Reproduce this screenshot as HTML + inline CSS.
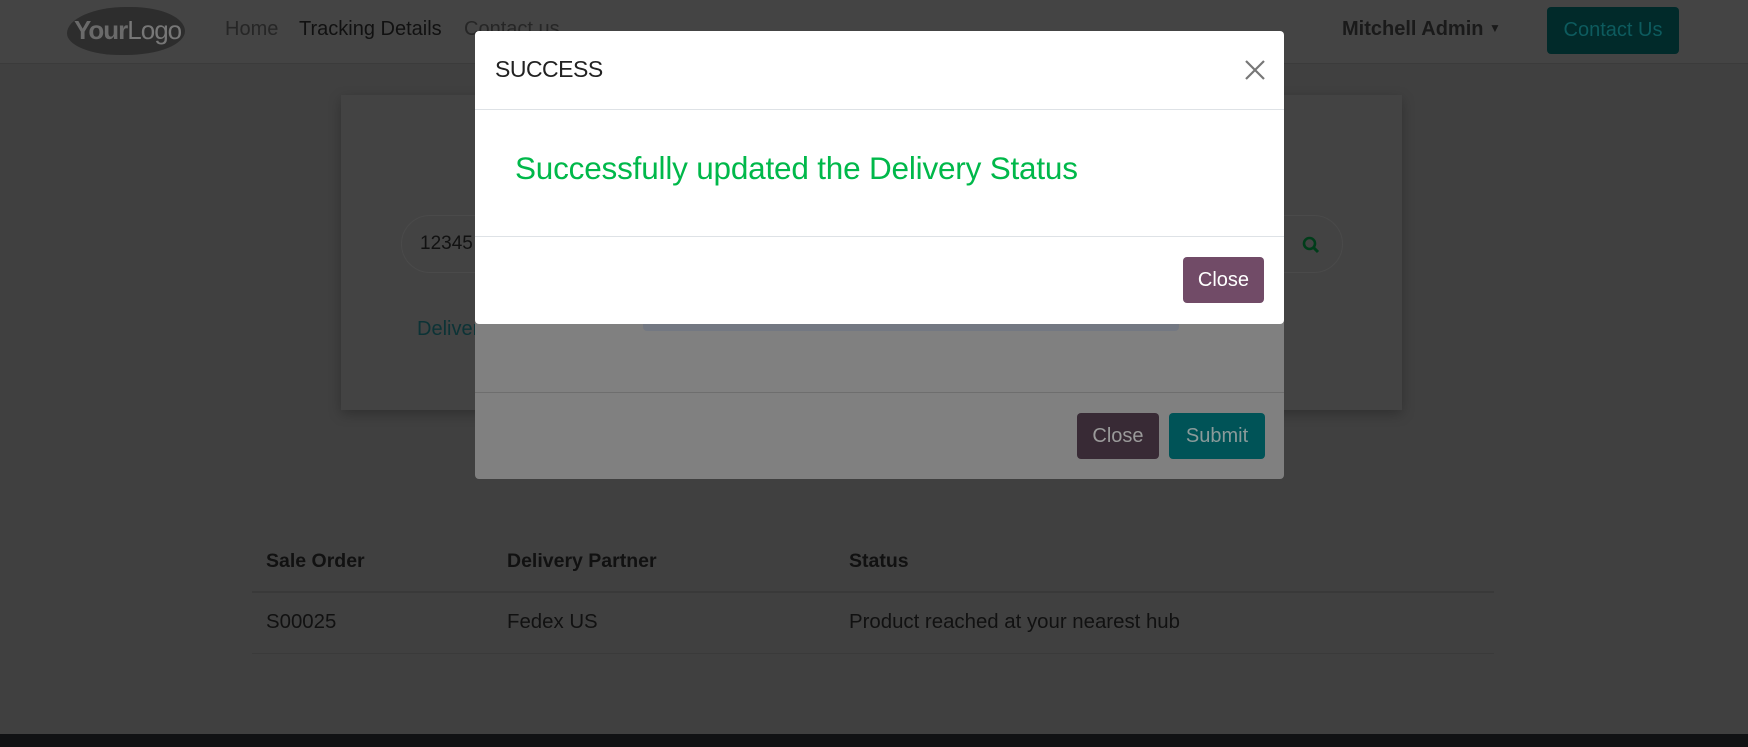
<!DOCTYPE html>
<html><head><meta charset="utf-8"><style>
*{margin:0;padding:0;box-sizing:border-box}
body{width:1748px;height:747px;overflow:hidden;background:#404040;font-family:"Liberation Sans",sans-serif;position:relative}
.a{position:absolute}
.nav{left:0;top:0;width:1748px;height:64px;background:#444;border-bottom:1px solid #3b3b3b}
.t{white-space:nowrap}
</style></head><body>
<div class="a nav"></div>
<div class="a" style="left:67px;top:7px;width:118px;height:48px;background:#2d2d2d;border-radius:50% 45% 50% 45%/55% 50% 50% 45%"></div>
<div class="a t" style="left:74px;top:15px;font-size:26px;color:#777;letter-spacing:-1px"><b style="color:#6a6a6a">Your</b>Logo</div>
<div class="a t" style="left:225px;top:18px;font-size:20px;color:#262626">Home</div>
<div class="a t" style="left:299px;top:18px;font-size:20px;color:#111">Tracking Details</div>
<div class="a t" style="left:464px;top:18px;font-size:20px;color:#262626">Contact us</div>
<div class="a t" style="left:1342px;top:18px;font-size:20px;color:#1a1a1a;font-weight:bold">Mitchell Admin <span style="font-size:12px;vertical-align:3px">▼</span></div>
<div class="a t" style="left:1547px;top:7px;width:132px;height:47px;background:#012a2a;border-radius:4px;color:#0d5b5e;font-size:20px;text-align:center;line-height:47px">Contact Us</div>

<div class="a" style="left:341px;top:95px;width:1061px;height:315px;background:#434343;box-shadow:0 4px 12px rgba(0,0,0,.25)"></div>
<div class="a" style="left:401px;top:215px;width:942px;height:58px;border:1px solid #4a4a4a;border-radius:29px"></div>
<div class="a t" style="left:420px;top:233px;font-size:19px;color:#111">12345</div>
<svg class="a" style="left:1302px;top:236px" width="18" height="18" viewBox="0 0 18 18"><circle cx="7.5" cy="7.5" r="5.5" fill="none" stroke="#003d1a" stroke-width="2.6"/><path d="M11.5 11.5L16 16" stroke="#003d1a" stroke-width="3"/></svg>
<div class="a t" style="left:417px;top:318px;font-size:20px;color:#0c3336">Delivery</div>

<div class="a" style="left:475px;top:260px;width:809px;height:219px;background:#808080;border-radius:0 0 4px 4px"></div>
<div class="a" style="left:643px;top:300px;width:536px;height:31px;background:#737882;border-radius:0 0 4px 4px"></div>
<div class="a" style="left:475px;top:392px;width:809px;height:1px;background:#6e6e6e"></div>
<div class="a t" style="left:1077px;top:413px;width:82px;height:46px;background:#382a35;border-radius:4px;color:#9a9a9a;font-size:20px;text-align:center;line-height:46px">Close</div>
<div class="a t" style="left:1169px;top:413px;width:96px;height:46px;background:#005357;border-radius:4px;color:#8a9a9a;font-size:20px;text-align:center;line-height:46px">Submit</div>

<div class="a" style="left:475px;top:31px;width:809px;height:293px;background:#fff;border-radius:4px"></div>
<div class="a t" style="left:495px;top:56px;font-size:23px;color:#222;letter-spacing:-.5px">SUCCESS</div>
<svg class="a" style="left:1244px;top:59px" width="22" height="22" viewBox="0 0 22 22"><path d="M2 2L20 20M20 2L2 20" stroke="#777" stroke-width="2.2"/></svg>
<div class="a" style="left:475px;top:109px;width:809px;height:1px;background:#dee2e6"></div>
<div class="a t" style="left:515px;top:150px;font-size:31.5px;color:#00b84a;letter-spacing:-.2px">Successfully updated the Delivery Status</div>
<div class="a" style="left:475px;top:236px;width:809px;height:1px;background:#dee2e6"></div>
<div class="a t" style="left:1183px;top:257px;width:81px;height:46px;background:#714b67;border-radius:4px;color:#fff;font-size:20px;text-align:center;line-height:46px">Close</div>

<div class="a t" style="left:266px;top:550px;font-size:19.5px;font-weight:bold;color:#111">Sale Order</div>
<div class="a t" style="left:507px;top:550px;font-size:19.5px;font-weight:bold;color:#111">Delivery Partner</div>
<div class="a t" style="left:849px;top:550px;font-size:19.5px;font-weight:bold;color:#111">Status</div>
<div class="a" style="left:252px;top:591px;width:1242px;height:2px;background:#393939"></div>
<div class="a t" style="left:266px;top:611px;font-size:20.4px;color:#111">S00025</div>
<div class="a t" style="left:507px;top:611px;font-size:20.4px;color:#111">Fedex US</div>
<div class="a t" style="left:849px;top:611px;font-size:20.4px;color:#111">Product reached at your nearest hub</div>
<div class="a" style="left:252px;top:653px;width:1242px;height:1px;background:#3a3a3a"></div>
<div class="a" style="left:0;top:734px;width:1748px;height:13px;background:#111214"></div>
</body></html>
